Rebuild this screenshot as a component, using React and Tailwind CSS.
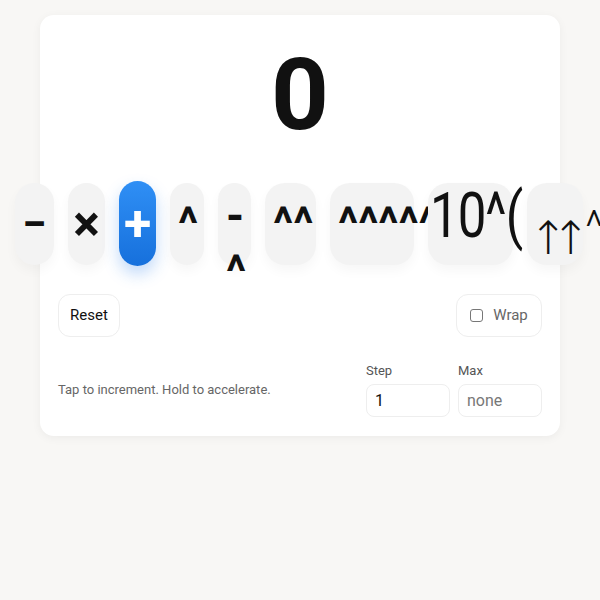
import { useState } from 'react'

const ops = [
  { key: 'sub', w: 'w-[39px]', label: '−', cls: 'text-[44px] font-bold leading-none flex items-center justify-center' },
  { key: 'mul', w: 'w-[37px]', label: '×', cls: 'text-[50px] font-bold leading-none flex items-center justify-center' },
  { key: 'add', w: 'w-[37px]', label: '+', cls: 'text-[50px] font-bold leading-none flex items-center justify-center' },
  { key: 'pow', w: 'w-[34px]', label: '^', cls: 'text-[46px] font-bold leading-[56px] pt-[9px]', lift: true },
  { key: 'npow', w: 'w-[33px]', label: '-^', cls: 'text-[46px] font-bold leading-[56px] pt-[5px]' },
  { key: 'tet', w: 'w-[51px]', label: '^^', cls: 'text-[46px] font-bold leading-[56px] pt-[9px]', lift: true },
  { key: 'pent', w: 'w-[84px]', label: '^^^^^', cls: 'text-[46px] font-bold leading-[56px] pt-[9px]', lift: true },
]

function OpButton({ op, active, onClick }) {
  if (active) {
    return (
      <button
        onClick={onClick}
        className={`${op.w} h-[85px] -mt-[2px] shrink-0 rounded-full bg-gradient-to-b from-[#2f8ff5] to-[#1670dc] text-white shadow-[0_8px_16px_rgba(30,120,235,0.28)] ${op.cls}`}
      >
        {op.label}
      </button>
    )
  }
  return (
    <button
      onClick={onClick}
      className={`${op.w} h-[82px] shrink-0 rounded-[20px] bg-[#f3f3f3] text-[#111] shadow-[0_6px_12px_rgba(0,0,0,0.035)] px-[8px] text-center align-top ${op.cls}`}
    >
      <span className={op.lift ? 'block -mt-[10px]' : 'block'}>{op.label}</span>
    </button>
  )
}

export default function App() {
  const [value, setValue] = useState(0)
  const [selected, setSelected] = useState('add')
  const [wrap, setWrap] = useState(false)
  const [step, setStep] = useState('1')
  const [max, setMax] = useState('')

  return (
    <div className="w-[600px] min-h-[600px] overflow-hidden bg-[#f8f7f5] pt-[15px] font-['Roboto','Liberation_Sans',sans-serif]">
      <div className="ml-[40px] w-[520px] rounded-[14px] bg-white shadow-[0_2px_10px_rgba(0,0,0,0.05)] px-[18px] pt-[29px] pb-[19px]">
        <div className="text-center text-[101px] font-bold leading-none text-[#111]">{value}</div>

        {/* operator row, wider than the card */}
        <div className="-ml-[43px] mt-[38px] flex items-start gap-[14px] h-[82px]">
          {ops.map(op => (
            <OpButton key={op.key} op={op} active={selected === op.key} onClick={() => setSelected(op.key)} />
          ))}
          <button
            onClick={() => setSelected('hyper')}
            className="w-[85px] h-[82px] shrink-0 rounded-[20px] bg-[#f3f3f3] text-[#111] shadow-[0_6px_12px_rgba(0,0,0,0.035)] flex items-center whitespace-nowrap pl-[2px] leading-none"
          >
            <span className="inline-block text-[51px] scale-y-[1.25] -translate-y-[9px] tracking-[-1px]">10^(</span>
          </button>
          <button
            onClick={() => setSelected('knuth')}
            className="relative w-[56px] h-[82px] shrink-0 rounded-[20px] bg-[#f3f3f3] text-[#111] shadow-[0_6px_12px_rgba(0,0,0,0.035)] flex items-center whitespace-nowrap pl-[2px] leading-none"
          >
            <span className="inline-block text-[46px] translate-y-[14px] font-['DejaVu_Sans',sans-serif] font-light text-[#111] tracking-[-16px]">↑↑</span>
            <span className="absolute left-[58px] top-[22px] text-[44px] font-light">^</span>
          </button>
        </div>

        <div className="mt-[29px] flex items-center justify-between">
          <button
            onClick={() => setValue(0)}
            className="h-[43px] px-[11px] rounded-[12px] border border-[#eeeeee] bg-white text-[15px] text-[#111]"
          >
            Reset
          </button>
          <label className="h-[43px] w-[86px] rounded-[12px] border border-[#eeeeee] bg-white flex items-center justify-center gap-[10px] text-[15px] text-[#666] cursor-pointer">
            <input
              type="checkbox"
              checked={wrap}
              onChange={e => setWrap(e.target.checked)}
              className="appearance-none w-[13px] h-[13px] rounded-[3px] border border-[#777] bg-white"
            />
            Wrap
          </label>
        </div>

        <div className="mt-[26px] flex items-center justify-between">
          <p className="text-[13px] text-[#666]">Tap to increment. Hold to accelerate.</p>
          <div className="flex gap-[8px]">
            <div className="flex flex-col">
              <span className="text-[13px] text-[#555] leading-[16px] mb-[5px]">Step</span>
              <input
                value={step}
                onChange={e => setStep(e.target.value)}
                className="w-[84px] h-[33px] rounded-[8px] border border-[#eeeeee] px-[8px] text-[16px] text-[#111] outline-none"
              />
            </div>
            <div className="flex flex-col">
              <span className="text-[13px] text-[#555] leading-[16px] mb-[5px]">Max</span>
              <input
                value={max}
                placeholder="none"
                onChange={e => setMax(e.target.value)}
                className="w-[84px] h-[33px] rounded-[8px] border border-[#eeeeee] px-[8px] text-[16px] text-[#111] placeholder-[#777] outline-none"
              />
            </div>
          </div>
        </div>
      </div>
    </div>
  )
}
